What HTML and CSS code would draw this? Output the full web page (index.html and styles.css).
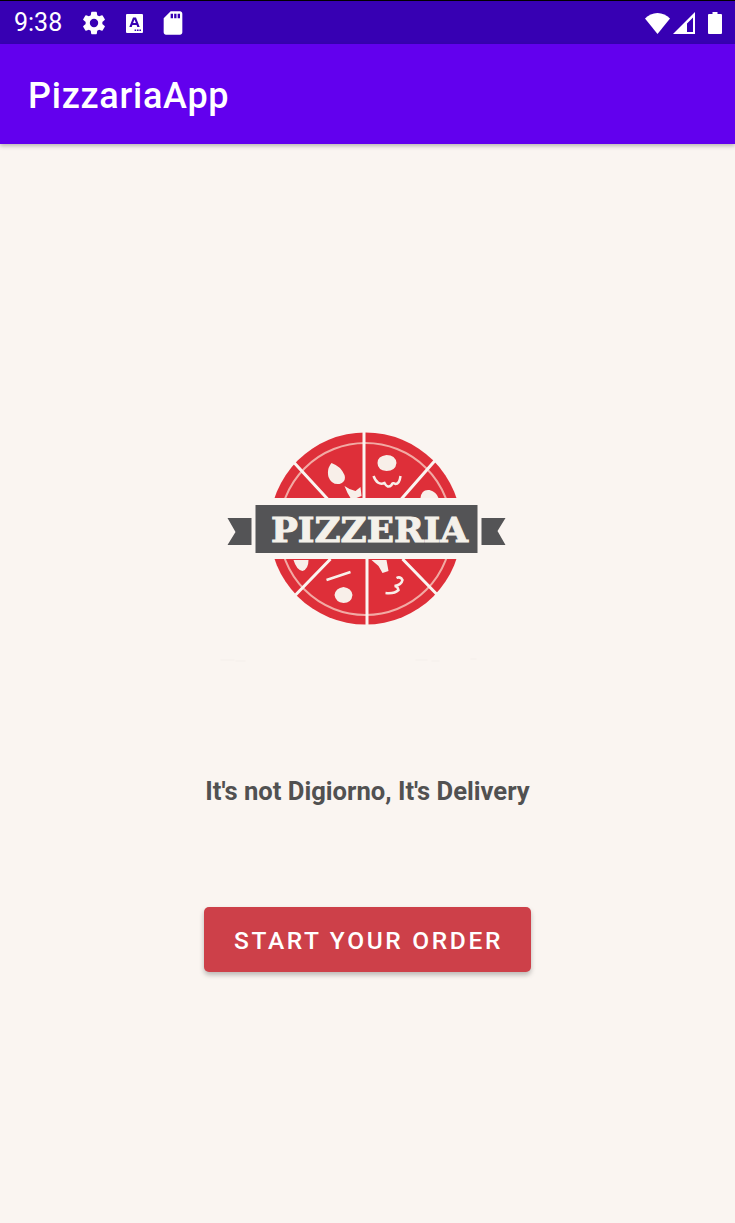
FILE: index.html
```html
<!DOCTYPE html>
<html lang="en">

<head>
    <meta charset="UTF-8">
    <meta name="viewport" content="width=device-width, initial-scale=1.0">
    <title>PizzariaApp</title>
    <link rel="stylesheet" href="styles.css">
</head>

<body>
    <div class="statusbar">
        <span class="time">9:38</span>
        <svg class="ico ico-gear" viewBox="0 0 24 24"><path d="M19.14 12.94c.04-.3.06-.61.06-.94s-.02-.64-.07-.94l2.03-1.58a.49.49 0 0 0 .12-.61l-1.92-3.32a.49.49 0 0 0-.59-.22l-2.39.96c-.5-.38-1.03-.7-1.62-.94l-.36-2.54a.48.48 0 0 0-.48-.41h-3.84a.47.47 0 0 0-.47.41l-.36 2.54c-.59.24-1.13.57-1.62.94l-2.39-.96a.48.48 0 0 0-.59.22L2.74 8.87a.47.47 0 0 0 .12.61l2.03 1.58c-.05.3-.09.63-.09.94s.02.64.07.94l-2.03 1.58a.49.49 0 0 0-.12.61l1.92 3.32c.12.22.37.29.59.22l2.39-.96c.5.38 1.03.7 1.62.94l.36 2.54c.05.24.24.41.48.41h3.84c.24 0 .44-.17.47-.41l.36-2.54c.59-.24 1.13-.56 1.62-.94l2.39.96c.22.08.47 0 .59-.22l1.92-3.32a.47.47 0 0 0-.12-.61l-2.01-1.58zM12 15.6A3.6 3.6 0 1 1 12 8.4a3.6 3.6 0 0 1 0 7.2z"/></svg>
        <svg class="ico ico-a" viewBox="0 0 17 19">
            <path fill-rule="evenodd" d="M1 0h15a1 1 0 0 1 1 1v17a1 1 0 0 1-1 1H1a1 1 0 0 1-1-1V1a1 1 0 0 1 1-1zM7 3.500 3.300 13h2.400l.7-2h4.200l.7 2h2.400L10 3.500zM7.100 9 8.500 5.400 9.900 9zM8.600 15.400h1.600V17H8.600zM11 15.400h1.600V17H11zM13.400 15.400h1.600V17h-1.600z"/>
        </svg>
        <svg class="ico ico-sd" viewBox="0 0 24 24"><path d="M18 2h-8L4.020 8 4 20c0 1.100.9 2 2 2h12c1.100 0 2-.9 2-2V4c0-1.100-.9-2-2-2zm-6 6h-2V4h2v4zm3 0h-2V4h2v4zm3 0h-2V4h2v4z"/></svg>
        <div class="spacer"></div>
        <svg class="ico ico-wifi" viewBox="0 0 25 21"><path d="M12.500 21 0 5.600C3.400 2.200 7.700 0 12.500 0S21.600 2.200 25 5.600z"/></svg>
        <svg class="ico ico-signal" viewBox="0 0 22 22">
            <path fill-rule="evenodd" d="M22 0v22H0zM20 5.500 14 11.500V20h6z"/>
        </svg>
        <svg class="ico ico-batt" viewBox="0 0 14 22"><path d="M4.500 0h5v2H13a1 1 0 0 1 1 1v18a1 1 0 0 1-1 1H1a1 1 0 0 1-1-1V3a1 1 0 0 1 1-1h3.500z"/></svg>
    </div>

    <div class="appbar">PizzariaApp</div>

    <div class="content">
        <svg class="logo" viewBox="2.500 0 300 250">
            <g class="pizza">
                <circle class="red" cx="150" cy="108.500" r="96"/>
                <circle class="crust" cx="150" cy="109" r="86"/>
                <path class="cut" d="M148.500 10V80M151.500 136V206M78 42 113 80M220 40 185 80M115 139 80 175M187 139 222 175"/>
                <rect class="gap" x="40" y="78" width="222" height="61"/>
                <path class="topping" d="M116 43q9 3 13 12 2 7-5 9-8 1-11-7-2-8 3-14zM129 66l5 3 6 2 5-4 1 9-5 2h-6l-3-5zM171 35q9 0 10 8-1 8-10 8-9-1-9-8 0-7 9-8zM205 78q1-9 9-8 7 2 9 8zM78 140h15q0 9-6 11-6-1-9-11zM128 167q8 1 9 8-1 8-9 8-8-1-9-8 1-7 9-8zM156 140h15l2 11-6 2-4-7z"/>
                <path class="squiggle" d="M158 56q4 10 11 7 3 6 7 2 1-3 4-1 4 0 5-8M111 160l24-8M170 173q9 1 13-3-1-4-4-4 7-1 8-6-2-4-6-2"/>
            </g>
            <path class="ribbon" d="M12 98H36v27H12l8-13zM266 98h24l-8 13 8 14H266z"/>
            <rect class="ribbon" x="40" y="85" width="222" height="48"/>
            <text class="logotext" x="154" y="122" text-anchor="middle" textLength="197" lengthAdjust="spacingAndGlyphs">PIZZERIA</text>
            <path class="ghost" d="M5 240h14M20 241h10M200 240h12M216 241h8M255 239h6"/>
        </svg>
        <p class="tagline">It's not Digiorno, It's Delivery</p>
        <button class="startbtn">START YOUR ORDER</button>
    </div>
</body>

</html>
```

FILE: styles.css
```css
* {
    margin: 0px;
    padding: 0px;
    box-sizing: border-box;
}

html,
body {
    height: 100%;
}

body {
    display: flex;
    flex-direction: column;
    overflow: hidden;
    background-color: #faf5f1;
    font-family: Roboto, "Liberation Sans", sans-serif;
}

.statusbar {
    display: flex;
    align-items: center;
    height: 44px;
    padding: 1px 13px 0 14px;
    border-top: 1px solid #000;
    background-color: #3700b3;
    color: #fff;
}

.time {
    width: 66px;
    font-size: 25px;
    line-height: 44px;
}

.spacer {
    flex: 1;
}

.ico {
    display: block;
    fill: #fff;
}

.ico-gear {
    width: 28px;
    height: 28px;
}

.ico-a {
    width: 17px;
    height: 19px;
    margin-left: 18px;
}

.ico-sd {
    width: 28px;
    height: 28px;
    margin-left: 16px;
}

.ico-wifi {
    width: 25px;
    height: 21px;
}

.ico-signal {
    width: 22px;
    height: 22px;
    margin-left: 3px;
}

.ico-batt {
    width: 14px;
    height: 22px;
    margin-left: 13px;
}

.appbar {
    position: relative;
    height: 100px;
    padding-left: 28px;
    background-color: #6200ee;
    box-shadow: 0 2px 4px rgba(0, 0, 0, 0.25);
    color: #fff;
    font-size: 36px;
    font-weight: 500;
    letter-spacing: 0.75px;
    line-height: 104px;
}

.content {
    flex: 1;
    display: flex;
    flex-direction: column;
    align-items: center;
    padding-top: 276px;
}

.logo {
    display: block;
    width: 300px;
    height: 250px;
}

.pizza {
    filter: blur(0.6px);
}

.red {
    fill: #de2f39;
}

.crust {
    fill: none;
    stroke: #f2aaa4;
    stroke-width: 2;
}

.cut {
    fill: none;
    stroke: #faf5f1;
    stroke-width: 3;
}

.gap {
    fill: #faf5f1;
}

.topping {
    fill: #f8efe9;
}

.squiggle {
    fill: none;
    stroke: #f8efe9;
    stroke-width: 2.500;
}

.ribbon {
    fill: #545456;
}

.logotext {
    fill: #f4f1ea;
    stroke: #f4f1ea;
    stroke-width: 1;
    font-family: "DejaVu Serif", "Liberation Serif", serif;
    font-size: 33px;
    font-weight: 700;
}

.ghost {
    fill: none;
    stroke: #f7f2ee;
    stroke-width: 2;
}

.tagline {
    margin-top: 103px;
    color: #515151;
    font-size: 25.600px;
    font-weight: 700;
    line-height: 36px;
}

.startbtn {
    width: 327px;
    height: 65px;
    margin-top: 98px;
    padding: 2px 0 0 2px;
    border: none;
    border-radius: 5px;
    background-color: #cd4049;
    box-shadow: 0 3px 5px rgba(0, 0, 0, 0.25);
    color: #fff;
    font-family: Roboto, "Liberation Sans", sans-serif;
    font-size: 24.500px;
    font-weight: 500;
    letter-spacing: 2.650px;
}
```
